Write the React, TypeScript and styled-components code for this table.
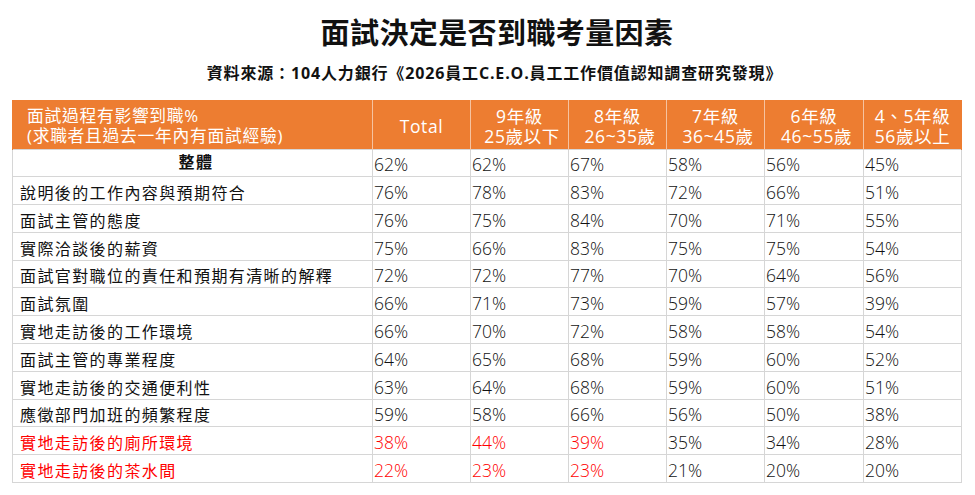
import React from "react";
import styled, { createGlobalStyle } from "styled-components";

const GlobalStyle = createGlobalStyle`
  html, body { margin: 0; padding: 0; background: #ffffff; }
  body { font-family: "Noto Sans CJK TC", "Noto Sans", sans-serif; color: #000; }
`;

const Page = styled.div`
  width: 975px;
  height: 495px;
  display: flex;
  flex-direction: column;
  align-items: flex-start;
  box-sizing: border-box;
  padding-top: 12px;
`;

const Title = styled.h1`
  margin: 0;
  align-self: stretch;
  text-align: center;
  padding-left: 19px;
  font-family: "Noto Sans CJK TC", sans-serif;
  font-weight: 700;
  font-size: 29px;
  letter-spacing: 0.4px;
  line-height: 38px;
  color: #111;
`;

const Subtitle = styled.div`
  margin-top: 12px;
  align-self: stretch;
  text-align: center;
  padding-left: 14px;
  font-family: "Open Sans", "Noto Sans CJK TC", sans-serif;
  font-weight: 700;
  font-size: 16px;
  letter-spacing: 0.85px;
  line-height: 22px;
  color: #111;
`;

const Table = styled.table`
  margin-top: 16px;
  margin-left: 12px;
  width: 949px;
  border-collapse: collapse;
  table-layout: fixed;
`;

const HeadCell = styled.th<{ $left?: boolean }>`
  background: #ed7d31;
  color: #ffffff;
  height: 49px;
  padding: ${(p) => (p.$left ? "3px 0 0 14px" : "4px 0 0 0")};
  box-sizing: border-box;
  border-left: 1px solid #f6c3a0;
  border-right: 1px solid #f6c3a0;
  text-align: ${(p) => (p.$left ? "left" : "center")};
  vertical-align: middle;
  font-family: "Open Sans", "Noto Sans CJK TC", sans-serif;
  font-weight: 400;
  font-size: ${(p) => (p.$left ? "16.8px" : "17.5px")};
  line-height: 20px;
  letter-spacing: ${(p) => (p.$left ? "0.7px" : "0.6px")};
  white-space: pre;
  &:first-child { border-left-color: #ed7d31; }
  &:last-child { border-right-color: #ed7d31; }
`;

const Row = styled.tr`
  height: 27.8px;
`;

const LabelCell = styled.td<{ $red?: boolean; $total?: boolean }>`
  border: 1px solid #d6d6d6;
  padding: 0 0 ${(p) => (p.$total ? "5px" : "2px")} 7px;
  text-align: ${(p) => (p.$total ? "center" : "left")};
  vertical-align: bottom;
  font-family: "Noto Sans CJK TC", sans-serif;
  font-weight: ${(p) => (p.$total ? 700 : 400)};
  font-size: 16px;
  line-height: 20px;
  letter-spacing: 1.4px;
  color: ${(p) => (p.$red ? "#ff0000" : "#111")};
  white-space: nowrap;
`;

const ValueCell = styled.td<{ $red?: boolean }>`
  border: 1px solid #d6d6d6;
  padding: 0 0 1px 1px;
  text-align: left;
  vertical-align: bottom;
  font-family: "Open Sans", sans-serif;
  font-weight: 300;
  font-size: 17.5px;
  line-height: 21px;
  color: ${(p) => (p.$red ? "#ff0000" : "#111")};
`;

type RowData = { label: string; values: string[]; redCount?: number; total?: boolean };

const headers = [
  "Total",
  "9年級\n 25歲以下",
  "8年級\n 26~35歲",
  "7年級\n 36~45歲",
  "6年級\n 46~55歲",
  "4、5年級\n56歲以上",
];

const rows: RowData[] = [
  { label: "整體", values: ["62%", "62%", "67%", "58%", "56%", "45%"], total: true },
  { label: "說明後的工作內容與預期符合", values: ["76%", "78%", "83%", "72%", "66%", "51%"] },
  { label: "面試主管的態度", values: ["76%", "75%", "84%", "70%", "71%", "55%"] },
  { label: "實際洽談後的薪資", values: ["75%", "66%", "83%", "75%", "75%", "54%"] },
  { label: "面試官對職位的責任和預期有清晰的解釋", values: ["72%", "72%", "77%", "70%", "64%", "56%"] },
  { label: "面試氛圍", values: ["66%", "71%", "73%", "59%", "57%", "39%"] },
  { label: "實地走訪後的工作環境", values: ["66%", "70%", "72%", "58%", "58%", "54%"] },
  { label: "面試主管的專業程度", values: ["64%", "65%", "68%", "59%", "60%", "52%"] },
  { label: "實地走訪後的交通便利性", values: ["63%", "64%", "68%", "59%", "60%", "51%"] },
  { label: "應徵部門加班的頻繁程度", values: ["59%", "58%", "66%", "56%", "50%", "38%"] },
  { label: "實地走訪後的廁所環境", values: ["38%", "44%", "39%", "35%", "34%", "28%"], redCount: 3 },
  { label: "實地走訪後的茶水間", values: ["22%", "23%", "23%", "21%", "20%", "20%"], redCount: 3 },
];

const colWidths = [360, 98, 98, 98, 98, 99, 98];

export default function App() {
  return (
    <Page>
      <GlobalStyle />
      <Title>面試決定是否到職考量因素</Title>
      <Subtitle>資料來源：104人力銀行《2026員工C.E.O.員工工作價值認知調查研究發現》</Subtitle>
      <Table>
        <colgroup>
          {colWidths.map((w, i) => (
            <col key={i} style={{ width: w }} />
          ))}
        </colgroup>
        <thead>
          <tr>
            <HeadCell $left>{"面試過程有影響到職%\n(求職者且過去一年內有面試經驗)"}</HeadCell>
            {headers.map((h) => (
              <HeadCell key={h}>{h}</HeadCell>
            ))}
          </tr>
        </thead>
        <tbody>
          {rows.map((r) => (
            <Row key={r.label}>
              <LabelCell $red={!!r.redCount} $total={r.total}>
                {r.label}
              </LabelCell>
              {r.values.map((v, i) => (
                <ValueCell key={i} $red={i < (r.redCount ?? 0)}>
                  {v}
                </ValueCell>
              ))}
            </Row>
          ))}
        </tbody>
      </Table>
    </Page>
  );
}
